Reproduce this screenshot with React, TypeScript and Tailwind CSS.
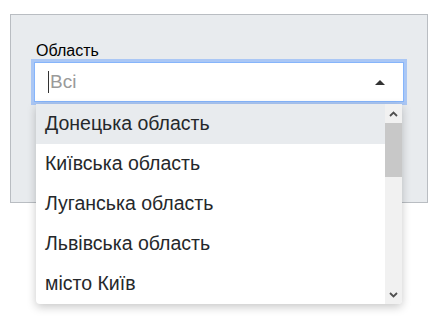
import React from "react";

const FONT = { fontFamily: '"Liberation Sans", Arial, sans-serif' };

const OPTIONS = [
  "Донецька область",
  "Київська область",
  "Луганська область",
  "Львівська область",
  "місто Київ",
];

function Chevron({ up }: { up?: boolean }) {
  return (
    <svg width="9" height="6" viewBox="0 0 9 6" className={up ? "" : "rotate-180"}>
      <path d="M1 5 L4.5 1.5 L8 5" fill="none" stroke="#505050" strokeWidth="1.8" />
    </svg>
  );
}

export default function App() {
  return (
    <div className="min-h-[316px] w-[440px] bg-white pt-[14px] pl-[10px]" style={FONT}>
      <div className="relative w-[418px] h-[189px] border border-[#b9bdc2] bg-[#e8ebee] px-[23px] pt-[26px]">
        <label className="block pl-[2px] text-[16px] leading-[20px] text-black mb-[1px]">Область</label>

        <div className="relative">
          {/* input */}
          <div className="flex items-center h-[40px] border border-[#86b5fb] bg-white shadow-[0_0_0_3px_#aac7f5] pl-[13px] pr-[18px]">
            <span className="w-px h-[22px] bg-[#333] mr-px" />
            <span className="flex-1 text-[19px] text-[#9a9a9a]">Всі</span>
            <span className="w-0 h-0 border-x-[5px] border-x-transparent border-b-[5px] border-b-[#333]" />
          </div>

          {/* dropdown menu */}
          <div className="absolute left-[2px] top-[42px] z-10 flex w-[366px] h-[200px] bg-white rounded-b-[4px] shadow-[0_3px_10px_rgba(0,0,0,0.22)] overflow-hidden">
            <ul className="flex-1">
              {OPTIONS.map((o, i) => (
                <li
                  key={o}
                  className={`h-[40px] flex items-center pl-[9px] text-[19.5px] text-[#25282b] ${
                    i === 0 ? "bg-[#e8ebee]" : ""
                  }`}
                >
                  {o}
                </li>
              ))}
            </ul>

            {/* scrollbar */}
            <div className="w-[17px] flex flex-col bg-[#f1f1f1]">
              <div className="h-[19px] flex items-center justify-center">
                <Chevron up />
              </div>
              <div className="flex-1">
                <div className="h-[54px] bg-[#c8c8c8]" />
              </div>
              <div className="h-[19px] flex items-center justify-center">
                <Chevron />
              </div>
            </div>
          </div>
        </div>
      </div>
    </div>
  );
}
